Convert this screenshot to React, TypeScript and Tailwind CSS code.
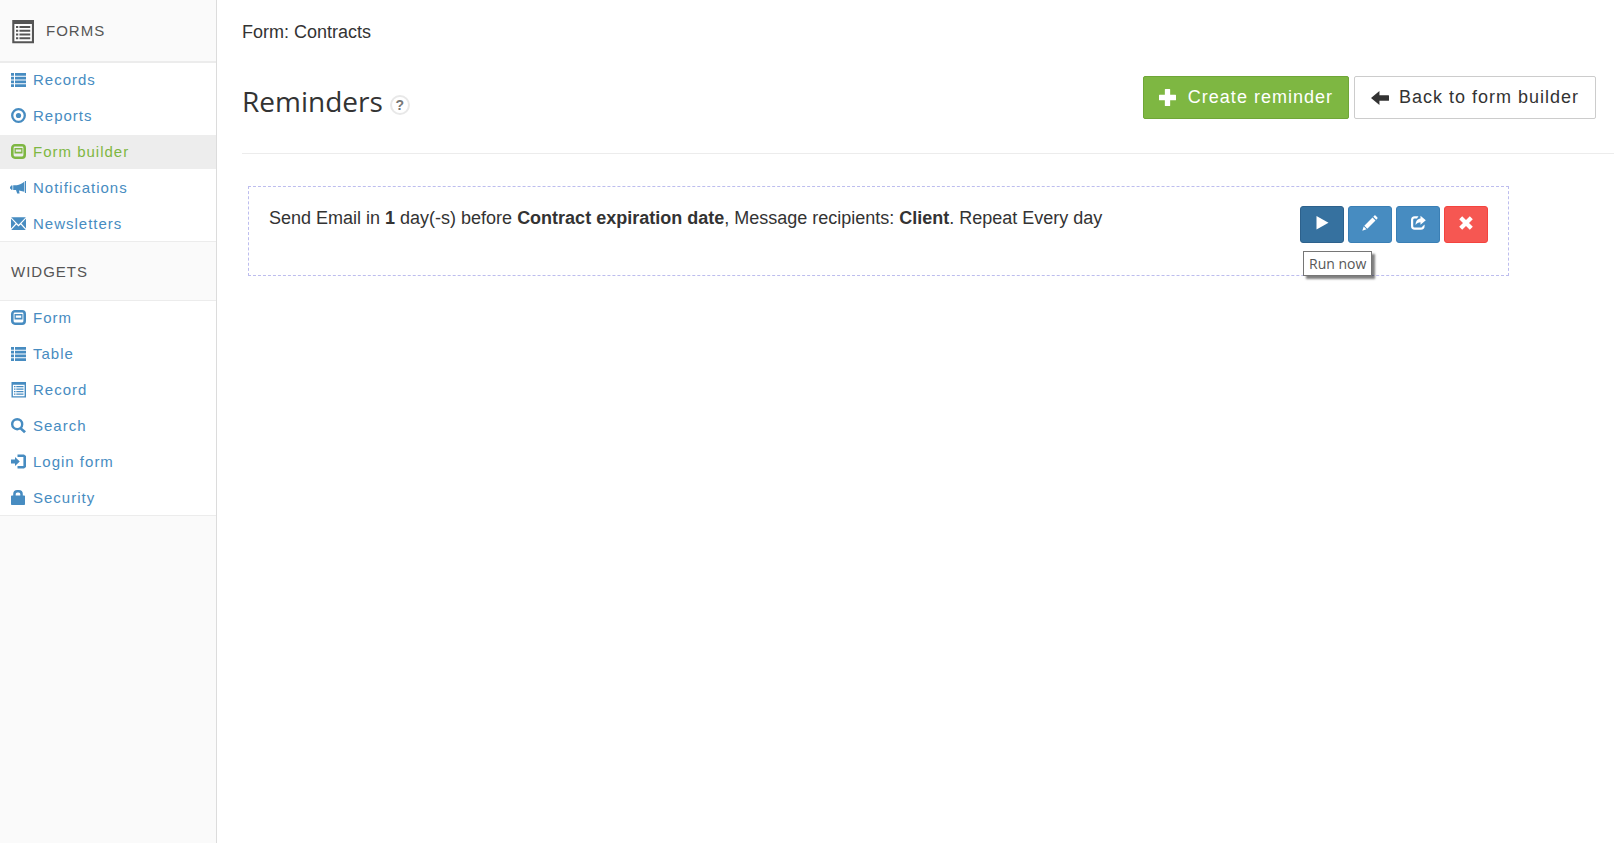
import type { ReactNode } from 'react'

interface IconProps {
  className?: string
}

interface NavItem {
  label: string
  icon: (props: IconProps) => ReactNode
  active?: boolean
}

function Svg({ className = 'size-4', children }: IconProps & { children: ReactNode }) {
  return (
    <svg viewBox="0 0 16 16" fill="currentColor" aria-hidden="true" className={`shrink-0 ${className}`}>
      {children}
    </svg>
  )
}

function ListIcon(props: IconProps) {
  return (
    <Svg {...props}>
      <path d="M1 1h3v2.8H1zM5 1h11v2.8H5zM1 4.8h3v2.8H1zM5 4.8h11v2.8H5zM1 8.5h3v2.8H1zM5 8.5h11v2.8H5zM1 12.2h3V15H1zM5 12.2h11V15H5z" />
    </Svg>
  )
}

function TargetIcon(props: IconProps) {
  return (
    <Svg {...props}>
      <circle cx="8.5" cy="7.5" r="6.3" fill="none" stroke="currentColor" strokeWidth="2.3" />
      <circle cx="8.5" cy="7.5" r="2.6" />
    </Svg>
  )
}

function FormIcon(props: IconProps) {
  return (
    <Svg {...props}>
      <rect x="2.3" y="1.3" width="12.4" height="12.4" rx="2.6" fill="none" stroke="currentColor" strokeWidth="2.6" />
      <path fillRule="evenodd" d="M4.5 4h8v5.4h-8zM5.8 5.6v2.2h5.4V5.6z" />
    </Svg>
  )
}

function BullhornIcon(props: IconProps) {
  return (
    <Svg {...props}>
      <path d="M14.9 1H16v12h-1.1zM14.3 1.8v10L9 10.4l.6 3.2H7.2L6 10H3.2V5.2h3.6C9.6 4.8 12 3.6 14.3 1.8zM0 6.6h1V5.4h1.5v4.4H1V8.8H0z" />
    </Svg>
  )
}

function EnvelopeIcon(props: IconProps) {
  return (
    <Svg {...props}>
      <path d="M1.2 1.3h14.6L8.5 8.8zM1 2.6l4.6 4.9L1 12.4zM16 2.6v9.8l-4.6-4.9zM6.4 8.4l2.1 2.2 2.1-2.2 5.2 5.6H1.2z" />
    </Svg>
  )
}

function RecordIcon(props: IconProps) {
  return (
    <Svg {...props}>
      <path d="M2.5 2.500h12.300v12H2.500z" fill="#fff" />
      <path fillRule="evenodd" d="M1.500 0h14.500v15.500H1.500zM2.900 2.700v11.500h11.700V2.700z" />
      <path d="M4 4h1.500v1.300H4zM6.300 4h7.200v1.300H6.300zM4 6.500h1.500v1.300H4zM6.300 6.500h7.200v1.300H6.300zM4 9h1.500v1.300H4zM6.300 9h7.200v1.300H6.300zM4 11.500h1.500v1.300H4zM6.300 11.500h7.200v1.300H6.300z" />
    </Svg>
  )
}

function SearchIcon(props: IconProps) {
  return (
    <Svg {...props}>
      <circle cx="7.2" cy="6.2" r="5" fill="none" stroke="currentColor" strokeWidth="2.4" />
      <path d="M11.2 9.200l4.800 4.100-1.900 1.900-4.900-4.400z" />
    </Svg>
  )
}

function LoginIcon(props: IconProps) {
  return (
    <Svg {...props}>
      <path d="M1 5.500h4V3L9.800 7.500 5 12V9.500H1z" />
      <path d="M7.500.500H14l2.500 2v10l-2.500 2H7.500v-2.600h5.900V3.100H7.500z" />
    </Svg>
  )
}

function LockIcon(props: IconProps) {
  return (
    <Svg {...props}>
      <path
        fillRule="evenodd"
        d="M3.200 5.500V4a4 4 0 0 1 4-4h1.600a4 4 0 0 1 4 4v1.500h1.400a.8.8 0 0 1 .8.8v8a.8.8 0 0 1-.8.8H1.800a.8.8 0 0 1-.8-.8v-8a.8.8 0 0 1 .8-.8zM5.700 5.500h4.600V4a1.600 1.600 0 0 0-1.600-1.600H7.300A1.600 1.600 0 0 0 5.700 4z"
      />
    </Svg>
  )
}

function PlusIcon(props: IconProps) {
  return (
    <Svg {...props}>
      <path d="M6 0h4a.5.5 0 0 1 .5.5v5h5a.5.5 0 0 1 .5.5v4a.5.5 0 0 1-.5.5h-5v5a.5.5 0 0 1-.5.5H6a.5.5 0 0 1-.5-.5v-5h-5A.5.5 0 0 1 0 10V6a.5.5 0 0 1 .5-.5h5v-5A.5.5 0 0 1 6 0z" />
    </Svg>
  )
}

function ArrowLeftIcon(props: IconProps) {
  return (
    <Svg {...props}>
      <path d="M0 8l7.500-6.200v3.800h8a.5.5 0 0 1 .5.5v3.800a.5.5 0 0 1-.5.5h-8v3.800z" />
    </Svg>
  )
}

function PlayIcon(props: IconProps) {
  return (
    <Svg {...props}>
      <path d="M2.500 1l12 6.800-12 6.700z" />
    </Svg>
  )
}

function PencilIcon(props: IconProps) {
  return (
    <Svg {...props}>
      <path d="M12.400.6a.8.8 0 0 1 1.100 0l1.900 1.900a.8.8 0 0 1 0 1.100l-1.100 1.100-3-3zM10.500 2.500l3 3-8.200 8.200-3-3zM1.700 11.500l2.800 2.800-4.200 1.400z" />
    </Svg>
  )
}

function ShareIcon(props: IconProps) {
  return (
    <Svg {...props}>
      <path d="M8.500 1.200H4.800A3.800 3.800 0 0 0 1 5v6a3.800 3.800 0 0 0 3.800 3.800h6A3.800 3.800 0 0 0 14.600 11V9.500l-2.200 1.900a1.300 1.300 0 0 1-1.300 1.100H4.500a1.300 1.300 0 0 1-1.300-1.300V4.700a1.300 1.300 0 0 1 1.300-1.300H7z" />
      <path d="M10.500.8l5.300 4.400-5.300 4.600V7.200C8.300 7.200 6.900 8 5.600 10c0-3.600 1.600-6.200 4.900-6.500z" />
    </Svg>
  )
}

function RemoveIcon(props: IconProps) {
  return (
    <Svg {...props}>
      <path d="M4.200 1.200L8 5l3.800-3.800 3 3L11 8l3.800 3.800-3 3L8 11l-3.800 3.800-3-3L5 8 1.200 4.200z" />
    </Svg>
  )
}

const FORM_ITEMS: NavItem[] = [
  { label: 'Records', icon: ListIcon },
  { label: 'Reports', icon: TargetIcon },
  { label: 'Form builder', icon: FormIcon, active: true },
  { label: 'Notifications', icon: BullhornIcon },
  { label: 'Newsletters', icon: EnvelopeIcon },
]

const WIDGET_ITEMS: NavItem[] = [
  { label: 'Form', icon: FormIcon },
  { label: 'Table', icon: ListIcon },
  { label: 'Record', icon: RecordIcon },
  { label: 'Search', icon: SearchIcon },
  { label: 'Login form', icon: LoginIcon },
  { label: 'Security', icon: LockIcon },
]

function NavList({ items }: { items: NavItem[] }) {
  return (
    <ul className="flex flex-col gap-0.5 border-y border-[#ececec] bg-white">
      {items.map(({ label, icon: Icon, active }) => (
        <li key={label}>
          <a
            href="#"
            className={`flex h-[34px] items-center gap-[7px] pl-2.5 text-[15px] tracking-[1px] ${
              active ? 'bg-[#ededed] text-[#7eb742]' : 'text-[#478cc1]'
            }`}
          >
            <Icon />
            {label}
          </a>
        </li>
      ))}
    </ul>
  )
}

function Sidebar() {
  return (
    <aside className="w-[217px] shrink-0 border-r border-[#dcdcdc] bg-[#fafafa] text-[#555]">
      <h2 className="flex h-[62px] items-center gap-3 border-b border-[#ececec] pt-0.5 pl-2.5 text-[15px] tracking-[1px]">
        <RecordIcon className="size-6" />
        FORMS
      </h2>
      <nav aria-label="Forms">
        <NavList items={FORM_ITEMS} />
      </nav>
      <h2 className="flex h-[58px] items-center pt-0.5 pl-[11px] text-[15px] tracking-[1px]">WIDGETS</h2>
      <nav aria-label="Widgets">
        <NavList items={WIDGET_ITEMS} />
      </nav>
    </aside>
  )
}

const ACTION = 'flex h-[37px] w-11 items-center justify-center rounded-[3px] border pb-1 text-white'

export default function App() {
  return (
    <div className="flex min-h-screen bg-white font-['Liberation_Sans',Arial,sans-serif] text-[#333]">
      <Sidebar />
      <main className="min-w-0 flex-1 pl-[25px]">
        <p className="pt-5 text-[18px] leading-6">Form: Contracts</p>

        <header className="flex items-start justify-between border-b border-[#ececec] pt-8 pr-[18px] pb-[34px]">
          <div className="flex h-[43px] items-center gap-[7px] pt-1.5">
            <h1 className="font-['Open_Sans','Noto_Sans',sans-serif] text-[28px] leading-10">Reminders</h1>
            <button
              type="button"
              aria-label="Help"
              className="mt-2 flex size-5 items-center justify-center rounded-full border-2 border-[#e8e8e8] text-[14px] leading-none font-bold text-[#777]"
            >
              ?
            </button>
          </div>
          <div className="flex gap-[5px] text-[18px] tracking-[1px]">
            <button
              type="button"
              className="flex h-[43px] items-center gap-3 rounded-[2px] border border-[#6fa637] bg-[#7eb742] px-[15px] text-white"
            >
              <PlusIcon className="size-[17px]" />
              Create reminder
            </button>
            <button
              type="button"
              className="flex h-[43px] items-center gap-2.5 rounded-[2px] border border-[#ccc] bg-white px-4"
            >
              <ArrowLeftIcon className="size-[18px]" />
              Back to form builder
            </button>
          </div>
        </header>

        <section className="mt-8 mr-[105px] ml-1.5 flex min-h-[90px] items-start justify-between border border-dashed border-[#bdbdee] px-5 pt-[19px]">
          <p className="text-[18px] leading-6">
            Send Email in <strong>1</strong> day(-s) before <strong>Contract expiration date</strong>, Message
            recipients: <strong>Client</strong>. Repeat Every day
          </p>
          <div className="flex gap-1">
            <div className="relative">
              <button type="button" aria-label="Run now" className={`${ACTION} border-[#2d618c] bg-[#36719f]`}>
                <PlayIcon />
              </button>
              <span
                role="tooltip"
                className="absolute top-[45px] left-[3px] border border-[#767676] bg-white px-[5px] font-['Open_Sans','Noto_Sans',sans-serif] text-[14px] leading-[23px] whitespace-nowrap text-[#575757] shadow-[3px_3px_2px_rgba(0,0,0,0.5)]"
              >
                Run now
              </span>
            </div>
            <button type="button" aria-label="Edit" className={`${ACTION} border-[#3a7fb5] bg-[#478cc1]`}>
              <PencilIcon />
            </button>
            <button type="button" aria-label="Share" className={`${ACTION} border-[#3a7fb5] bg-[#478cc1]`}>
              <ShareIcon />
            </button>
            <button type="button" aria-label="Delete" className={`${ACTION} border-[#f4433e] bg-[#f65752]`}>
              <RemoveIcon />
            </button>
          </div>
        </section>
      </main>
    </div>
  )
}
